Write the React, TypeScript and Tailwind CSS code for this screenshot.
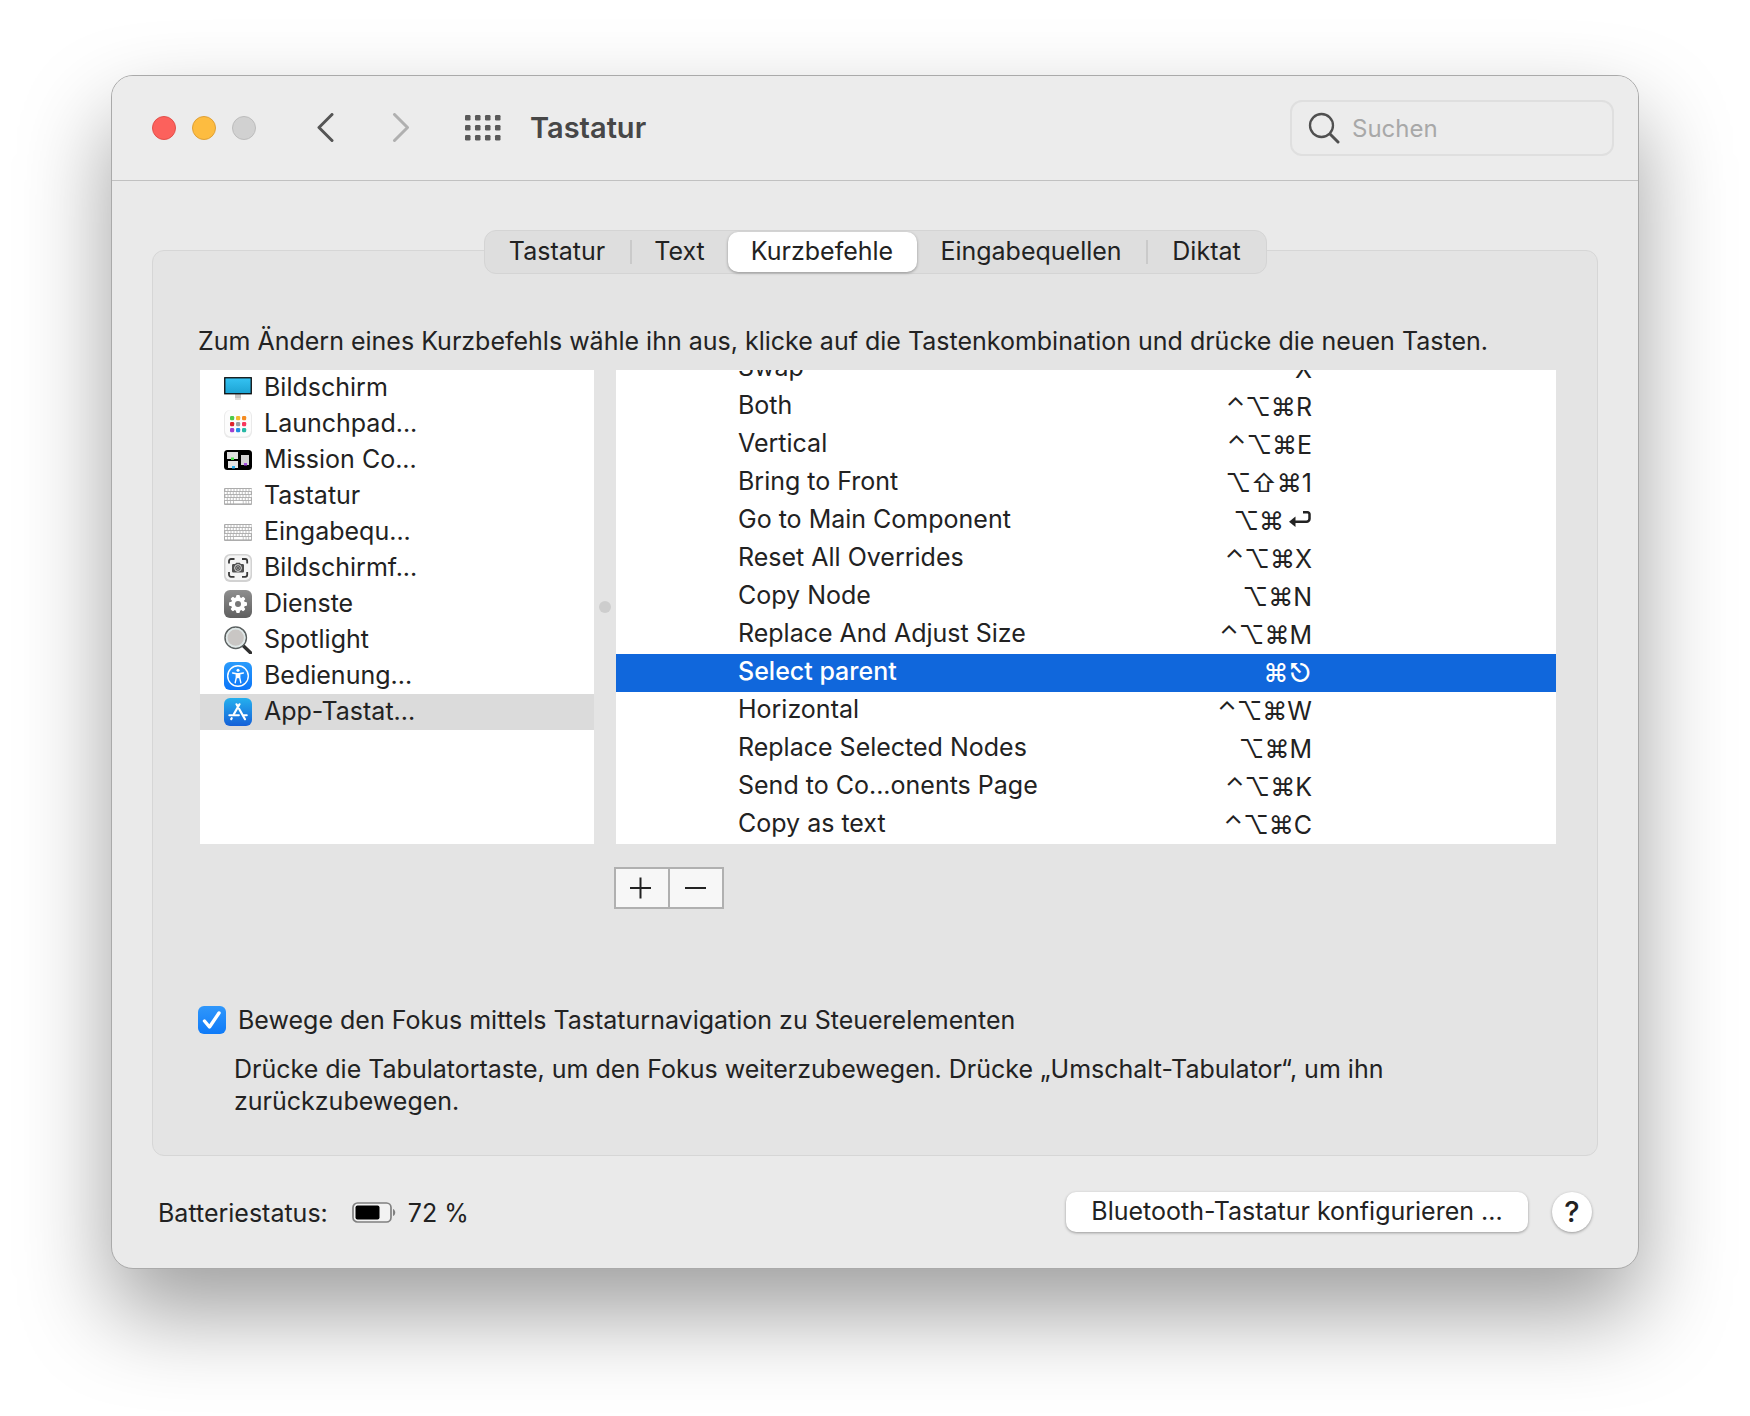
import React, { useState } from "react";

const DisplayIcon = () => (
  <svg viewBox="0 0 28 28" className="size-7 shrink-0" aria-hidden="true">
    <defs>
      <linearGradient id="screen" x1="0" y1="0" x2="0" y2="1">
        <stop offset="0" stopColor="#35c3f3" />
        <stop offset="1" stopColor="#1ca3d3" />
      </linearGradient>
    </defs>
    <rect x="11" y="20" width="6" height="6" fill="#c4c4c4" />
    <rect x="11" y="24" width="6" height="2" fill="#dedede" />
    <rect x="0.75" y="3.75" width="26.500" height="16" fill="url(#screen)" stroke="#0b0b0b" strokeWidth="1.300" />
  </svg>
);

const launchpadDots = [
  "#4cc94a", "#f5b82e", "#f48a1f",
  "#e0232b", "#9b9fa3", "#f7375c",
  "#a13fd0", "#1f8fe6", "#27b8a4",
];

const LaunchpadIcon = () => (
  <svg viewBox="0 0 28 28" className="size-7 shrink-0" aria-hidden="true">
    <rect x="0" y="0" width="28" height="28" rx="6" fill="#eaeaea" />
    <rect x="1" y="0" width="26" height="26.500" rx="6" fill="#fcfcfc" />
    {launchpadDots.map((c, i) => (
      <rect key={c} x={6 + (i % 3) * 6} y={6 + Math.floor(i / 3) * 6} width="4.200" height="4.200" rx="1.200" fill={c} />
    ))}
  </svg>
);

const MissionControlIcon = () => (
  <svg viewBox="0 0 28 28" className="size-7 shrink-0" aria-hidden="true">
    <rect x="0" y="4" width="28" height="20" rx="3.5" fill="#000" />
    <rect x="3" y="6" width="11" height="7" fill="#dedede" />
    <rect x="4" y="15" width="10" height="7" fill="#e4e4e4" />
    <rect x="17" y="9" width="8" height="10" fill="#d3d3d3" />
    <rect x="7" y="11.5" width="3" height="2.5" fill="#4be04a" />
    <rect x="8" y="20" width="3" height="2.5" fill="#2bb1f0" />
    <rect x="20" y="17" width="3" height="2.5" fill="#a54be0" />
  </svg>
);

const KeyboardIcon = () => (
  <svg viewBox="0 0 28 28" className="size-7 shrink-0" aria-hidden="true">
    <rect x="0" y="6" width="28" height="17" rx="1" fill="#acacac" />
    {[0, 1, 2, 3].map((r) =>
      [0, 1, 2, 3, 4, 5, 6, 7, 8].map((c) => (
        <rect key={`${r}-${c}`} x={1 + c * 3 - (r % 2) * 0.8 + 0.4} y={7 + r * 3} width="2.2" height="2.1" fill="#fff" />
      ))
    )}
    <rect x="1" y="19" width="2.4" height="2.4" fill="#fff" />
    <rect x="4" y="19" width="2" height="2.4" fill="#fff" />
    <rect x="6.7" y="19" width="2.4" height="2.4" fill="#fff" />
    <rect x="9.8" y="19" width="9" height="2.4" fill="#fff" />
    <rect x="19.5" y="19" width="2.2" height="2.4" fill="#fff" />
    <rect x="22.4" y="19" width="2" height="2.4" fill="#fff" />
    <rect x="25.1" y="19" width="2" height="2.4" fill="#fff" />
  </svg>
);

const ScreenshotIcon = () => (
  <svg viewBox="0 0 28 28" className="size-7 shrink-0" aria-hidden="true">
    <rect x="0" y="0" width="28" height="28" rx="6" fill="#d2d2d2" />
    <rect x="1.5" y="1.5" width="25" height="24.5" rx="5" fill="#f5f5f5" />
    <path d="M5 9.5V7a2 2 0 0 1 2-2h3.500M18 5h3.200a2 2 0 0 1 2 2v2.500M23.200 18v2.800a2 2 0 0 1-2 2H18M10.500 22.800H7a2 2 0 0 1-2-2V18" fill="none" stroke="#3a3a3a" strokeWidth="1.800" />
    <path d="M9.300 10h1.900l1-1.300h3.600l1 1.300h1.900a1.300 1.300 0 0 1 1.300 1.300v6a1.300 1.300 0 0 1-1.300 1.300H9.300A1.300 1.300 0 0 1 8 17.300v-6A1.300 1.300 0 0 1 9.300 10z" fill="#505050" />
    <circle cx="14" cy="14" r="3.400" fill="#505050" stroke="#dcdcdc" strokeWidth="1" />
    <circle cx="14" cy="14" r="1.500" fill="none" stroke="#a5a5a5" strokeWidth="0.800" />
  </svg>
);

const ServicesIcon = () => (
  <svg viewBox="0 0 28 28" className="size-7 shrink-0" aria-hidden="true">
    <defs>
      <linearGradient id="gearBg" x1="0" y1="0" x2="0" y2="1">
        <stop offset="0" stopColor="#8f8f8f" />
        <stop offset="1" stopColor="#5f5f5f" />
      </linearGradient>
    </defs>
    <rect width="28" height="28" rx="6" fill="url(#gearBg)" />
    <g fill="#fff">
      {[0, 45, 90, 135].map((a) => (
        <rect key={a} x="12.100" y="5" width="3.800" height="18" rx="1.200" transform={`rotate(${a} 14 14)`} />
      ))}
      <circle cx="14" cy="14" r="7" />
    </g>
    <circle cx="14" cy="14" r="3" fill="#777" />
  </svg>
);

const SpotlightIcon = () => (
  <svg viewBox="0 0 28 28" className="size-7 shrink-0" aria-hidden="true">
    <path d="M19.500 20l7 6.700" stroke="#2f2f2f" strokeWidth="3.400" strokeLinecap="round" />
    <circle cx="11.700" cy="11.700" r="10.700" fill="#cfd0d0" stroke="#5a6060" strokeWidth="1.500" />
    <circle cx="11.700" cy="11.700" r="9" fill="#c9c6c4" stroke="#dfe8e8" strokeWidth="1.700" />
  </svg>
);

const AccessibilityIcon = () => (
  <svg viewBox="0 0 28 28" className="size-7 shrink-0" aria-hidden="true">
    <defs>
      <linearGradient id="accBg" x1="0" y1="0" x2="0" y2="1">
        <stop offset="0" stopColor="#2b9cfb" />
        <stop offset="1" stopColor="#0a74f8" />
      </linearGradient>
    </defs>
    <rect width="28" height="28" rx="6" fill="url(#accBg)" />
    <circle cx="14" cy="14" r="10.300" fill="none" stroke="#fff" strokeWidth="1.400" />
    <circle cx="14" cy="8.300" r="1.500" fill="#fff" />
    <path d="M8.600 11l3.700.7v4l-1.100 5M19.400 11l-3.700.7v4l1.100 5" fill="none" stroke="#fff" strokeWidth="1.400" strokeLinecap="round" />
    <rect x="12" y="11" width="4" height="5.200" fill="#fff" />
  </svg>
);

const AppStoreIcon = () => (
  <svg viewBox="0 0 28 28" className="size-7 shrink-0" aria-hidden="true">
    <defs>
      <linearGradient id="storeBg" x1="0" y1="0" x2="0" y2="1">
        <stop offset="0" stopColor="#25b0ee" />
        <stop offset="1" stopColor="#1560d8" />
      </linearGradient>
    </defs>
    <rect width="28" height="28" rx="6" fill="url(#storeBg)" />
    <g fill="none" stroke="#fff" strokeWidth="2.200" strokeLinecap="round">
      <path d="M15.500 6.300L9.800 16.200M12.500 6.300l1.300 2.200M15.200 11l5.800 10.200M7.700 20.200l-.5.900" />
      <path d="M5.300 17.300h9.600M19.800 17.300h3" strokeWidth="2" />
    </g>
  </svg>
);

const ReturnKeyIcon = () => (
  <svg viewBox="0 0 24 20" role="img" aria-label="Return" className="ml-1 inline-block h-5 w-6 align-baseline">
    <path d="M15 2.200h4.500a2 2 0 0 1 2 2v4.600a3 3 0 0 1-3 3H6" fill="none" stroke="currentColor" strokeWidth="2.500" />
    <path d="M1 11.800l6.500-5.300v10.600z" fill="currentColor" />
  </svg>
);

const categories = [
  { label: "Bildschirm", Icon: DisplayIcon },
  { label: "Launchpad...", Icon: LaunchpadIcon },
  { label: "Mission Co...", Icon: MissionControlIcon },
  { label: "Tastatur", Icon: KeyboardIcon },
  { label: "Eingabequ...", Icon: KeyboardIcon },
  { label: "Bildschirmf...", Icon: ScreenshotIcon },
  { label: "Dienste", Icon: ServicesIcon },
  { label: "Spotlight", Icon: SpotlightIcon },
  { label: "Bedienung...", Icon: AccessibilityIcon },
  { label: "App-Tastat...", Icon: AppStoreIcon },
];

const shortcuts: { name: string; keys: string; returnKey?: boolean }[] = [
  { name: "Swap", keys: "X" },
  { name: "Both", keys: "⌃⌥⌘R" },
  { name: "Vertical", keys: "⌃⌥⌘E" },
  { name: "Bring to Front", keys: "⌥⇧⌘1" },
  { name: "Go to Main Component", keys: "⌥⌘", returnKey: true },
  { name: "Reset All Overrides", keys: "⌃⌥⌘X" },
  { name: "Copy Node", keys: "⌥⌘N" },
  { name: "Replace And Adjust Size", keys: "⌃⌥⌘M" },
  { name: "Select parent", keys: "⌘⎋" },
  { name: "Horizontal", keys: "⌃⌥⌘W" },
  { name: "Replace Selected Nodes", keys: "⌥⌘M" },
  { name: "Send to Co...onents Page", keys: "⌃⌥⌘K" },
  { name: "Copy as text", keys: "⌃⌥⌘C" },
];

const tabs = [
  { label: "Tastatur", width: "w-[147px]", divider: true },
  { label: "Text", width: "w-24", divider: false },
  { label: "Kurzbefehle", width: "w-[189px]", divider: false },
  { label: "Eingabequellen", width: "w-[231px]", divider: true },
  { label: "Diktat", width: "w-[118px]", divider: false },
];

function Toolbar() {
  return (
    <header className="flex h-[105px] items-center border-b border-[#c1c1c1] bg-[#ececec] pr-6 pl-10">
      <div className="flex gap-4">
        <button aria-label="Schließen" className="size-6 rounded-full border border-[#e2504a] bg-[#fc615c]" />
        <button aria-label="Minimieren" className="size-6 rounded-full border border-[#dfa036] bg-[#fdbc40]" />
        <button aria-label="Zoomen" className="size-6 rounded-full border border-[#bcbcbc] bg-[#d1d1d1]" />
      </div>
      <button aria-label="Zurück" className="ml-[60px]">
        <svg viewBox="0 0 18 30" className="h-[30px] w-[18px]" fill="none" stroke="#555" strokeWidth="3" strokeLinecap="round" strokeLinejoin="round">
          <path d="M16 1.500L3 14.500l13 13" />
        </svg>
      </button>
      <button aria-label="Vorwärts" className="ml-[58px]">
        <svg viewBox="0 0 18 30" className="h-[30px] w-[18px]" fill="none" stroke="#b0b0b0" strokeWidth="3" strokeLinecap="round" strokeLinejoin="round">
          <path d="M2.500 1.500l13 13-13 13" />
        </svg>
      </button>
      <button aria-label="Alle einblenden" className="ml-[55px]">
        <svg viewBox="0 0 36 26" className="h-[26px] w-9" fill="#5a5a5a">
          {[0, 1, 2].map((r) =>
            [0, 1, 2, 3].map((c) => <rect key={`${r}-${c}`} x={c * 10} y={r * 10} width="5.500" height="5.500" rx="1.200" />)
          )}
        </svg>
      </button>
      <h1 className="ml-[29px] text-[29px] leading-9 font-semibold text-[#474747]">Tastatur</h1>
      <label className="ml-auto flex h-14 w-[324px] items-center gap-3 rounded-xl border-2 border-[#dfdfdf] pl-4">
        <svg viewBox="0 0 32 32" className="size-8 shrink-0" fill="none" stroke="#505050" aria-hidden="true">
          <circle cx="13.500" cy="13.500" r="11.500" strokeWidth="2.300" />
          <path d="M22 22l8 8" strokeWidth="3" strokeLinecap="round" />
        </svg>
        <input
          type="search"
          aria-label="Suchen"
          placeholder="Suchen"
          className="w-full min-w-0 bg-transparent pt-0.5 text-[24px] leading-8 outline-none placeholder:text-[#a8a8a8]"
        />
      </label>
    </header>
  );
}

function CategoryList() {
  const [active, setActive] = useState(9);
  return (
    <ul className="h-[474px] w-[394px] overflow-hidden bg-white">
      {categories.map(({ label, Icon }, i) => (
        <li key={label}>
          <button
            onClick={() => setActive(i)}
            className={`flex h-9 w-full items-center gap-3 pl-6 text-left ${i === active ? "bg-[#dbdbdb]" : ""}`}
          >
            <Icon />
            <span className="pb-0.5 leading-8">{label}</span>
          </button>
        </li>
      ))}
    </ul>
  );
}

function ShortcutTable() {
  const [active, setActive] = useState("Select parent");
  return (
    <div className="flex h-[474px] min-w-0 flex-1 flex-col justify-end overflow-hidden bg-white">
      <table className="w-full border-collapse">
        <tbody>
          {shortcuts.map(({ name, keys, returnKey }) => (
            <tr
              key={name}
              onClick={() => setActive(name)}
              className={`h-[38px] ${name === active ? "bg-[#1067dc] font-medium text-white" : ""}`}
            >
              <td className="p-0 pl-[122px] align-top leading-[34px] whitespace-nowrap">{name}</td>
              <td className="p-0 pr-[244px] text-right align-top leading-[38px] whitespace-nowrap">
                {keys}
                {returnKey && <ReturnKeyIcon />}
              </td>
            </tr>
          ))}
        </tbody>
      </table>
    </div>
  );
}

export default function App() {
  const [tab, setTab] = useState("Kurzbefehle");
  return (
    <div className="min-h-screen bg-white px-[111px] pt-[75px] pb-[147px] font-[Inter,sans-serif] text-[25px] text-[#222]">
      <main className="overflow-hidden rounded-[22px] border border-[#aaa] bg-[#eaeaea] shadow-[0_44px_90px_rgba(0,0,0,0.38)]">
        <Toolbar />
        <div className="px-10 pt-[49px] pb-9">
          <nav className="relative z-10 mx-auto -mb-6 flex h-11 w-fit items-center rounded-xl border border-[#d4d4d4] bg-[#dedede]">
            {tabs.map(({ label, width, divider }) => (
              <button
                key={label}
                onClick={() => setTab(label)}
                className={`flex h-10 items-center justify-center ${width} ${label === tab ? "rounded-[10px] bg-white shadow-[0_1px_3px_rgba(0,0,0,0.35)]" : ""}`}
              >
                <span className="flex-1 pb-0.5 leading-8">{label}</span>
                {divider && <span className="h-6 w-0.5 bg-[#cacaca]" />}
              </button>
            ))}
          </nav>
          <section className="rounded-xl border border-[#d6d6d6] bg-[#e4e4e4] pt-[74px] pr-[41px] pb-[38px] pl-[47px]">
            <p className="-ml-0.5 leading-8 whitespace-nowrap">
              Zum Ändern eines Kurzbefehls wähle ihn aus, klicke auf die Tastenkombination und drücke die neuen Tasten.
            </p>
            <div className="mt-[13px] flex">
              <CategoryList />
              <div className="flex w-[22px] items-center justify-center">
                <span className="size-3 rounded-full bg-[#cdcdcd]" />
              </div>
              <ShortcutTable />
            </div>
            <div className="mt-[23px] ml-[414px] flex h-[42px] w-[110px] divide-x-2 divide-[#b0b0b0] border-2 border-[#b0b0b0] bg-[#f7f7f7]">
              <button aria-label="Hinzufügen" className="flex flex-1 items-center justify-center">
                <svg viewBox="0 0 26 22" className="h-[22px] w-[26px]" stroke="#222" strokeWidth="2">
                  <path d="M1 11h21M11.500 0.500v21" />
                </svg>
              </button>
              <button aria-label="Entfernen" className="flex flex-1 items-center justify-center">
                <svg viewBox="0 0 26 22" className="h-[22px] w-[26px]" stroke="#222" strokeWidth="2">
                  <path d="M2 11h21" />
                </svg>
              </button>
            </div>
            <label className="mt-[95px] flex items-center gap-3 leading-8">
              <span className="relative -ml-0.5 flex size-7">
                <input type="checkbox" defaultChecked className="peer size-7 appearance-none rounded-md bg-white checked:bg-linear-to-b checked:from-[#2f97fb] checked:to-[#0d7af8]" />
                <svg viewBox="0 0 28 28" className="pointer-events-none absolute inset-0 hidden peer-checked:block" fill="none" stroke="#fff" strokeWidth="3.400" strokeLinecap="round" strokeLinejoin="round">
                  <path d="M6.500 15l5 6L21 7" />
                </svg>
              </span>
              <span>Bewege den Fokus mittels Tastaturnavigation zu Steuerelementen</span>
            </label>
            <p className="mt-[17px] ml-[34px] max-w-[1210px] leading-8">
              Drücke die Tabulatortaste, um den Fokus weiterzubewegen. Drücke „Umschalt-Tabulator“, um ihn zurückzubewegen.
            </p>
          </section>
          <footer className="mt-9 flex h-10 items-center pr-[6px] pl-[6px]">
            <span className="pt-0.5 leading-8">Batteriestatus:</span>
            <svg viewBox="0 0 44 22" className="ml-6 h-[22px] w-11" aria-hidden="true">
              <rect x="1" y="2" width="38" height="19" rx="4.500" fill="#f2f2f2" stroke="#808080" strokeWidth="1.700" />
              <rect x="3.500" y="4.500" width="24" height="14" rx="2" fill="#000" />
              <path d="M41 8c3 1 3 6 0 7z" fill="#808080" />
            </svg>
            <span className="ml-3 pt-0.5 leading-8">72 %</span>
            <button className="ml-auto h-10 w-[462px] rounded-[10px] bg-white pb-0.5 leading-8 shadow-[0_1px_3px_rgba(0,0,0,0.35)]">
              Bluetooth-Tastatur konfigurieren ...
            </button>
            <button aria-label="Hilfe" className="ml-6 size-10 rounded-full bg-white text-[29px] leading-10 font-medium shadow-[0_1px_3px_rgba(0,0,0,0.35)]">
              ?
            </button>
          </footer>
        </div>
      </main>
    </div>
  );
}
